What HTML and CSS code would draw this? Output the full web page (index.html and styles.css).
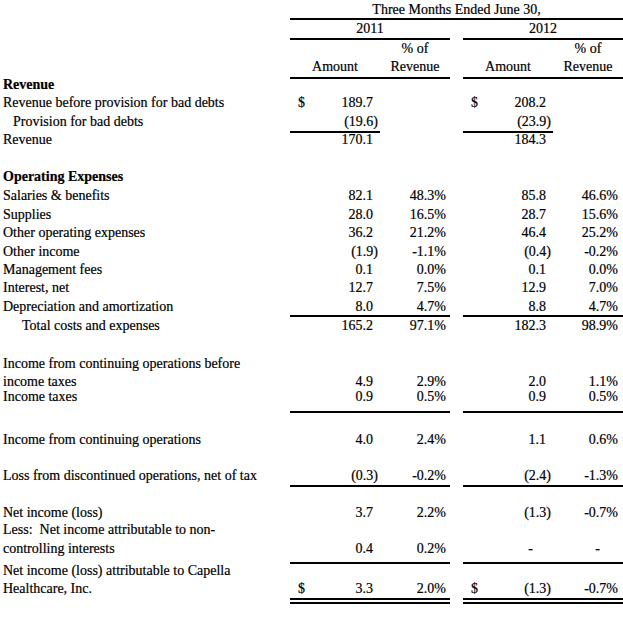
FILE: index.html
```html
<!DOCTYPE html>
<html lang="en">
<head>
<meta charset="utf-8">
<title>Three Months Ended June 30</title>
<link rel="stylesheet" href="styles.css">
</head>
<body>
<table class="fin">
  <colgroup>
    <col class="c-label"><col class="c-cur"><col class="c-amt"><col class="c-pct">
    <col class="c-gap"><col class="c-cur"><col class="c-amt"><col class="c-pct">
  </colgroup>
  <thead>
    <tr class="ln h20 pb2"><td></td><td colspan="7" class="u ctr title">Three Months Ended June 30,</td></tr>
    <tr class="ln h20 pb3"><td></td><td colspan="3" class="u ctr">2011</td><td></td><td colspan="3" class="u ctr">2012</td></tr>
    <tr class="h15"><td></td><td colspan="2"></td><td class="ctr pctof">% of</td><td></td><td colspan="2"></td><td class="ctr">% of</td></tr>
    <tr class="ln h24 pb4"><td></td><td colspan="2" class="u ctr">Amount</td><td class="u ctr">Revenue</td><td></td><td colspan="2" class="u ctr">Amount</td><td class="u ctr">Revenue</td></tr>
  </thead>
  <tbody>
    <tr class="h12"><td class="b">Revenue</td><td></td><td></td><td></td><td></td><td></td><td></td><td></td></tr>
    <tr class="h18"><td>Revenue before provision for bad debts</td><td>$</td><td>189.7</td><td></td><td></td><td>$</td><td>208.2</td><td></td></tr>
    <tr class="ln h24 pb3"><td class="ind1">Provision for bad debts</td><td class="u"></td><td class="u">(19.6<span class="cp">)</span></td><td></td><td></td><td class="u"></td><td class="u">(23.9<span class="cp">)</span></td><td></td></tr>
    <tr class="h13"><td>Revenue</td><td></td><td>170.1</td><td></td><td></td><td></td><td>184.3</td><td></td></tr>

    <tr class="h37"><td class="b">Operating Expenses</td><td></td><td></td><td></td><td></td><td></td><td></td><td></td></tr>
    <tr class="h19"><td>Salaries &amp; benefits</td><td></td><td>82.1</td><td>48.3%</td><td></td><td></td><td>85.8</td><td>46.6%</td></tr>
    <tr class="h19"><td>Supplies</td><td></td><td>28.0</td><td>16.5%</td><td></td><td></td><td>28.7</td><td>15.6%</td></tr>
    <tr class="h18"><td>Other operating expenses</td><td></td><td>36.2</td><td>21.2%</td><td></td><td></td><td>46.4</td><td>25.2%</td></tr>
    <tr class="h19"><td>Other income</td><td></td><td>(1.9<span class="cp">)</span></td><td>-1.1%</td><td></td><td></td><td>(0.4<span class="cp">)</span></td><td>-0.2%</td></tr>
    <tr class="h18"><td>Management fees</td><td></td><td>0.1</td><td>0.0%</td><td></td><td></td><td>0.1</td><td>0.0%</td></tr>
    <tr class="h18"><td>Interest, net</td><td></td><td>12.7</td><td>7.5%</td><td></td><td></td><td>12.9</td><td>7.0%</td></tr>
    <tr class="ln h23 pb2"><td>Depreciation and amortization</td><td class="u"></td><td class="u">8.0</td><td class="u">4.7%</td><td></td><td class="u"></td><td class="u">8.8</td><td class="u">4.7%</td></tr>
    <tr class="h15"><td class="ind2">Total costs and expenses</td><td></td><td>165.2</td><td>97.1%</td><td></td><td></td><td>182.3</td><td>98.9%</td></tr>

    <tr class="h38"><td>Income from continuing operations before</td><td></td><td></td><td></td><td></td><td></td><td></td><td></td></tr>
    <tr class="h18"><td>income taxes</td><td></td><td>4.9</td><td>2.9%</td><td></td><td></td><td>2.0</td><td>1.1%</td></tr>
    <tr class="ln h25 pb8"><td>Income taxes</td><td class="u"></td><td class="u">0.9</td><td class="u">0.5%</td><td></td><td class="u"></td><td class="u">0.9</td><td class="u">0.5%</td></tr>

    <tr class="h33"><td>Income from continuing operations</td><td></td><td>4.0</td><td>2.4%</td><td></td><td></td><td>1.1</td><td>0.6%</td></tr>

    <tr class="ln h41 pb3"><td>Loss from discontinued operations, net of tax</td><td class="u"></td><td class="u">(0.3<span class="cp">)</span></td><td class="u">-0.2%</td><td></td><td class="u"></td><td class="u">(2.4<span class="cp">)</span></td><td class="u">-1.3%</td></tr>

    <tr class="h32"><td>Net income (loss)</td><td></td><td>3.7</td><td>2.2%</td><td></td><td></td><td>(1.3<span class="cp">)</span></td><td>-0.7%</td></tr>
    <tr class="h17"><td>Less:&nbsp; Net income attributable to non-</td><td></td><td></td><td></td><td></td><td></td><td></td><td></td></tr>
    <tr class="ln h28 pb7"><td>controlling interests</td><td class="u"></td><td class="u">0.4</td><td class="u">0.2%</td><td></td><td class="u"></td><td class="u"><span class="dash-a">-</span></td><td class="u"><span class="dash-p">-</span></td></tr>
    <tr class="h13"><td>Net income (loss) attributable to Capella</td><td></td><td></td><td></td><td></td><td></td><td></td><td></td></tr>
    <tr class="dbl h27 pb3"><td>Healthcare, Inc.</td><td class="u">$</td><td class="u">3.3</td><td class="u">2.0%</td><td></td><td class="u">$</td><td class="u">(1.3<span class="cp">)</span></td><td class="u">-0.7%</td></tr>
  </tbody>
</table>
</body>
</html>
```

FILE: styles.css
```css
html, body {
  margin: 0;
  padding: 0;
  background: #ffffff;
}

body {
  font-family: "Liberation Serif", "Times New Roman", serif;
  font-size: 14px;
  color: #000000;
  -webkit-text-stroke: 0.2px #000000;
}

.fin {
  width: 623px;
  table-layout: fixed;
  border-collapse: separate;
  border-spacing: 0;
}

.c-label { width: 290px; }
.c-cur { width: 30px; }
.c-amt { width: 60px; }
.c-pct { width: 70px; }
.c-gap { width: 13px; }

.fin td {
  padding: 0;
  line-height: 12px;
  vertical-align: bottom;
  white-space: nowrap;
}

/* body column alignment */
.fin tbody td:nth-child(1) { padding-left: 3px; }
.fin tbody td:nth-child(2),
.fin tbody td:nth-child(6) { padding-left: 8px; }
.fin tbody td:nth-child(3),
.fin tbody td:nth-child(7) { text-align: right; padding-right: 7px; }
.fin tbody td:nth-child(4) { text-align: right; padding-right: 4px; }
.fin tbody td:nth-child(8) { text-align: right; padding-right: 5px; }

.fin tbody td.ind1 { padding-left: 13px; }
.fin tbody td.ind2 { padding-left: 22px; }

.b { font-weight: bold; }
.ctr { text-align: center; }
.title { padding-right: 5px; }
.pctof { padding-left: 8px; }

.cp { margin-right: -5px; }
.dash-a { margin-right: 13px; }
.dash-p { margin-right: 18px; }

/* rules */
.ln td { border-bottom: 2px solid transparent; }
.ln td.u { border-bottom-color: #000000; }
.dbl td { border-bottom: 6px double transparent; }
.dbl td.u { border-bottom-color: #000000; }

/* row heights */
.h12 { height: 12px; }
.h13 { height: 13px; }
.h15 { height: 15px; }
.h17 { height: 17px; }
.h18 { height: 18px; }
.h19 { height: 19px; }
.h20 { height: 20px; }
.h23 { height: 23px; }
.h24 { height: 24px; }
.h25 { height: 25px; }
.h27 { height: 27px; }
.h28 { height: 28px; }
.h32 { height: 32px; }
.h33 { height: 33px; }
.h37 { height: 37px; }
.h38 { height: 38px; }
.h41 { height: 41px; }

/* bottom padding per row */
.pb2 td { padding-bottom: 2px; }
.pb3 td { padding-bottom: 3px; }
.pb4 td { padding-bottom: 4px; }
.pb7 td { padding-bottom: 7px; }
.pb8 td { padding-bottom: 8px; }
```
